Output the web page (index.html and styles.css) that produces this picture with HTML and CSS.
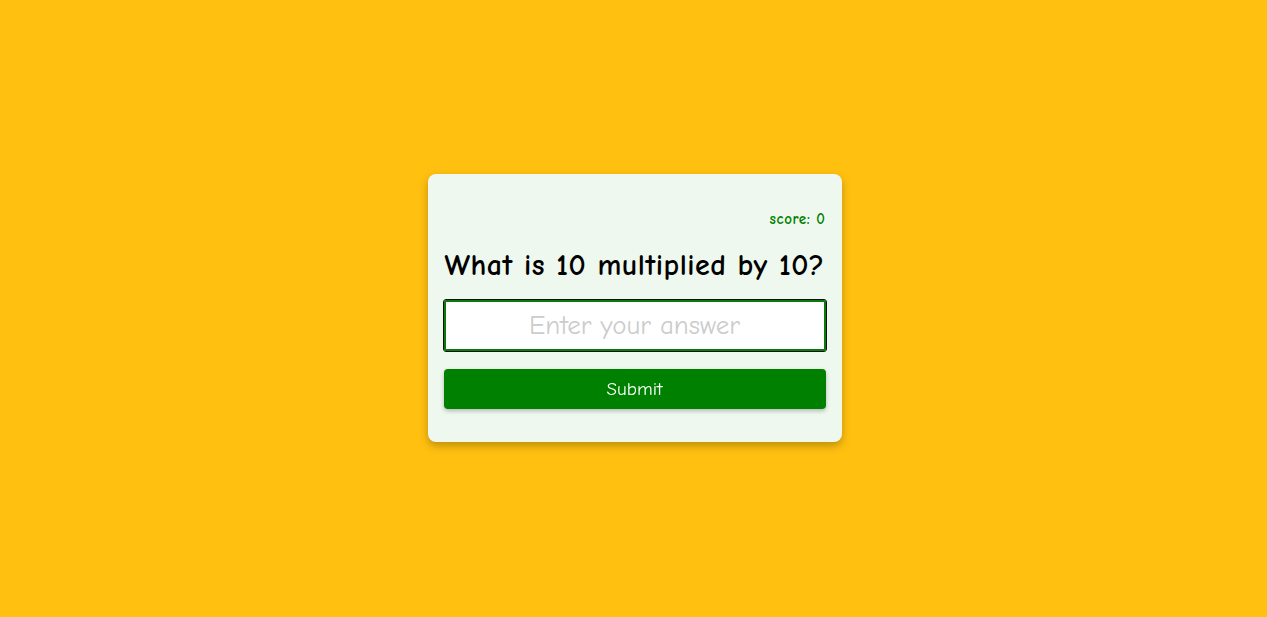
FILE: index.html
```html
<!DOCTYPE html>
<html lang="en">
<head>
<meta charset="utf-8">
<title>Math Quiz</title>
<link rel="stylesheet" href="styles.css">
</head>
<body>
  <main class="card">
    <p class="score">score: 0</p>
    <h1 class="question">What is 10 multiplied by 10?</h1>
    <input class="answer" type="text" placeholder="Enter your answer" autofocus>
    <button class="submit" type="button">Submit</button>
  </main>
</body>
</html>
```

FILE: styles.css
```css
* { box-sizing: border-box; }

html, body {
  height: 100%;
}

body {
  margin: 0;
  padding: 0 0 2px 2px;
  background: #ffc010;
  display: flex;
  align-items: center;
  justify-content: center;
  font-family: "Comic Sans MS", "Comic Neue", "Noto Sans", sans-serif;
}

.card {
  width: 414px;
  background: #eef8ee;
  border-radius: 8px;
  padding: 35px 16px 33px;
  display: flex;
  flex-direction: column;
  box-shadow: 0 4px 8px rgba(0, 0, 0, 0.25);
}

.score {
  margin: 0;
  text-align: right;
  color: #008000;
  font-weight: 700;
  font-size: 15px;
  letter-spacing: 0.6px;
  line-height: 20px;
}

.question {
  margin: 19px 0 0;
  text-align: center;
  font-size: 30px;
  letter-spacing: 0.5px;
  line-height: 36px;
  font-weight: 700;
  color: #000;
  white-space: nowrap;
}

.answer {
  margin-top: 16px;
  height: 51px;
  width: 100%;
  border: 2px solid #0a7a0a;
  outline: 1px solid #111;
  outline-offset: 0;
  border-radius: 2px;
  background: #fff;
  font-family: inherit;
  font-size: 27px;
  text-align: center;
  color: #000;
  caret-color: #008000;
}

.answer:focus {
  outline: 1px solid #111;
}

.answer::placeholder {
  color: #cccccc;
}

.submit {
  margin-top: 18px;
  height: 40px;
  width: 100%;
  border: none;
  border-radius: 4px;
  background: #008000;
  color: #fff;
  font-family: inherit;
  font-size: 19px;
  box-shadow: 0 2px 4px rgba(0, 0, 0, 0.25);
}
```
